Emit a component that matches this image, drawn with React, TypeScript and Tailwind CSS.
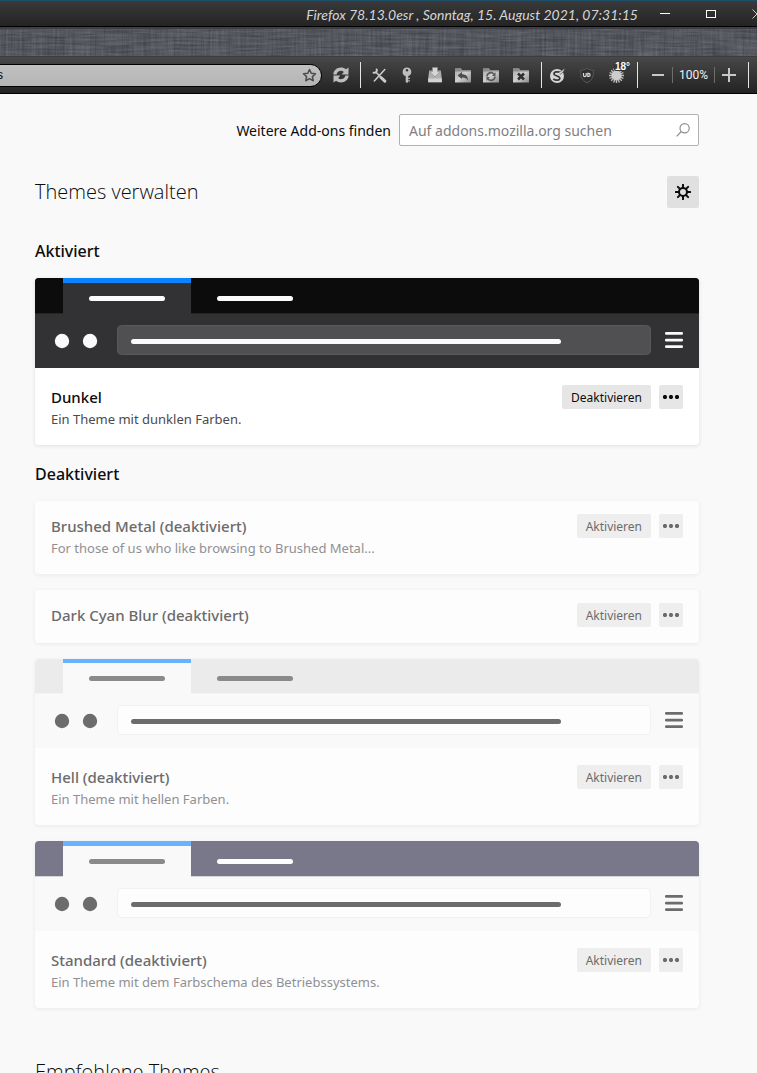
import React from "react";

type Palette = {
  frame: string;
  tab: string;
  accent: string;
  tabLine: string;
  idleLine: string;
  toolbar: string;
  divider: string;
  icon: string;
  field: string;
  fieldBorder: string;
  tabHeight: number;
};

const dark: Palette = {
  frame: "#0c0c0d",
  tab: "#323234",
  accent: "#0a84ff",
  tabLine: "#fbfbfe",
  idleLine: "#fbfbfe",
  toolbar: "#323234",
  divider: "#252526",
  icon: "#fafafa",
  field: "#505052",
  fieldBorder: "#59595b",
  tabHeight: 36,
};

const light: Palette = {
  frame: "#ebebec",
  tab: "#f9f9f9",
  accent: "#68b3ff",
  tabLine: "#8a8a8a",
  idleLine: "#8a8a8a",
  toolbar: "#f9f9f9",
  divider: "#f4f4f4",
  icon: "#6c6c6c",
  field: "#fdfdfd",
  fieldBorder: "#f1f1f1",
  tabHeight: 35,
};

const standard: Palette = {
  ...light,
  frame: "#78788a",
  idleLine: "#fdfdfe",
  divider: "#d5d5da",
  tabHeight: 36,
};

function Preview({ p }: { p: Palette }) {
  const t = p.tabHeight;
  return (
    <svg
      className="block w-full"
      viewBox={`0 0 664 ${t + 54}`}
      preserveAspectRatio="xMinYMin slice"
      aria-hidden="true"
    >
      <rect width="664" height={t + 54} fill={p.toolbar} />
      <rect width="664" height={t} fill={p.frame} />
      <rect y={t - 1} width="664" height="1" fill={p.divider} />
      <rect x="28" width="128" height={t} fill={p.tab} />
      <rect x="28" width="128" height={t - 31} fill={p.accent} />
      <rect x="54" y={t - 18} width="76" height="5" rx="2.5" fill={p.tabLine} />
      <rect x="182" y={t - 18} width="76" height="5" rx="2.5" fill={p.idleLine} />
      <circle cx="27" cy={t + 27} r="7.2" fill={p.icon} />
      <circle cx="55" cy={t + 27} r="7.2" fill={p.icon} />
      <rect x="82.5" y={t + 11.5} width="533" height="29" rx="4" fill={p.field} stroke={p.fieldBorder} />
      <rect x="96" y={t + 25} width="430" height="5" rx="2.5" fill={p.icon} />
      <rect x="630" y={t + 18} width="18" height="2.7" rx="1.2" fill={p.icon} />
      <rect x="630" y={t + 24.7} width="18" height="2.7" rx="1.2" fill={p.icon} />
      <rect x="630" y={t + 31.2} width="18" height="2.7" rx="1.2" fill={p.icon} />
    </svg>
  );
}

type Theme = { name: string; description?: string; preview?: Palette; enabled?: boolean };

function ThemeCard({ name, description, preview, enabled }: Theme) {
  return (
    <article
      className={
        enabled
          ? "overflow-hidden rounded bg-white text-[#0c0c0d] shadow-[0_1px_4px_rgba(12,12,13,0.1)]"
          : "overflow-hidden rounded bg-[#fdfdfd] text-[#6b6b6c] shadow-[0_1px_4px_rgba(12,12,13,0.07)]"
      }
    >
      {preview && <Preview p={preview} />}
      <div className={preview ? "flex items-start gap-2 px-4 pt-[17px] pb-4" : "flex items-start gap-2 px-4 pt-[13px] pb-4"}>
        <div className="min-w-0 flex-1">
          <h3 className="text-[15px] leading-6 font-medium">{name}</h3>
          {description && (
            <p className={enabled ? "text-[13px] leading-5 text-[#4a4a4f]" : "text-[13px] leading-5 text-[#909094]"}>
              {description}
            </p>
          )}
        </div>
        <button
          type="button"
          className={
            enabled
              ? "h-6 rounded-xs bg-[#e6e6e6] px-[9px] pt-px text-[12px]"
              : "h-6 rounded-xs bg-[#eeeeee] px-[9px] pt-px text-[12px]"
          }
        >
          {enabled ? "Deaktivieren" : "Aktivieren"}
        </button>
        <button
          type="button"
          aria-label="Weitere Optionen"
          className={
            enabled
              ? "flex size-6 items-center justify-center rounded-xs bg-[#e6e6e6]"
              : "flex size-6 items-center justify-center rounded-xs bg-[#eeeeee]"
          }
        >
          <svg width="16" height="4" viewBox="0 0 16 4" fill="currentColor" aria-hidden="true">
            <circle cx="2" cy="2" r="2.1" />
            <circle cx="8" cy="2" r="2.1" />
            <circle cx="14" cy="2" r="2.1" />
          </svg>
        </button>
      </div>
    </article>
  );
}

function ToolButton({ label, children }: { label: string; children: React.ReactNode }) {
  return (
    <button type="button" aria-label={label} className="relative flex h-7 w-7 shrink-0 items-center justify-center">
      {children}
    </button>
  );
}

function Separator() {
  return <span className="h-[26px] w-px shrink-0 bg-[#e4e4e4]" />;
}

function ThinSeparator() {
  return <span className="h-4 w-px shrink-0 bg-[#6d6d6d]" />;
}

function Folder({ children }: { children: React.ReactNode }) {
  return (
    <svg width="18" height="18" viewBox="0 0 18 18" aria-hidden="true">
      <defs>
        <linearGradient id="folder" x1="0" y1="0" x2="1" y2="1">
          <stop offset="0" stopColor="#a8a8a8" />
          <stop offset="0.5" stopColor="#d0d0d0" />
          <stop offset="1" stopColor="#8c8c8c" />
        </linearGradient>
      </defs>
      <path d="M1 2.5h6l1 1.5h9v12.5H1z" fill="url(#folder)" />
      <path d="M1 2.5h6l1 1.5h9v1.5H1z" fill="#8b8b8b" />
      {children}
    </svg>
  );
}

function TitleBar() {
  return (
    <header className="flex h-[27px] items-center justify-end border-t border-b border-t-[#1d5068] border-b-black bg-linear-to-b from-[#3a3a3a] to-[#242424] text-[#d3d7da]">
      <p className="mr-1 pt-0.5 font-['Lato',sans-serif] text-[14px] whitespace-nowrap italic">
        Firefox 78.13.0esr , Sonntag, 15. August 2021, 07:31:15
      </p>
      <button type="button" aria-label="Minimieren" className="flex h-full w-[46px] shrink-0 items-center justify-center">
        <span className="h-px w-2.5 bg-white" />
      </button>
      <button type="button" aria-label="Maximieren" className="flex h-full w-[46px] shrink-0 items-center justify-center">
        <span className="h-2 w-2.5 border border-white" />
      </button>
      <button type="button" aria-label="Schließen" className="-mr-[23px] flex h-full w-[46px] shrink-0 items-center justify-center">
        <svg width="10" height="10" viewBox="0 0 10 10" stroke="#d0d0d0" aria-hidden="true">
          <path d="M.5 .5l9 9M9.5 .5l-9 9" />
        </svg>
      </button>
    </header>
  );
}

function LinenStrip() {
  return (
    <div className="h-[29px] overflow-hidden border-t-2 border-[#3e3e45] bg-[#54575f]">
      <svg className="block h-full w-full" aria-hidden="true">
        <filter id="warp" x="0" y="0" width="100%" height="100%" colorInterpolationFilters="sRGB">
          <feTurbulence type="fractalNoise" baseFrequency="0.45 0.025" numOctaves="3" seed="4" />
          <feColorMatrix values="0.4 0 0 0 0.13  0.4 0 0 0 0.14  0.4 0 0 0 0.17  0 0 0 0 0.5" />
        </filter>
        <filter id="weft" x="0" y="0" width="100%" height="100%" colorInterpolationFilters="sRGB">
          <feTurbulence type="fractalNoise" baseFrequency="0.03 0.5" numOctaves="3" seed="9" />
          <feColorMatrix values="0.4 0 0 0 0.13  0.4 0 0 0 0.14  0.4 0 0 0 0.17  0 0 0 0 0.4" />
        </filter>
        <rect width="100%" height="100%" filter="url(#warp)" />
        <rect width="100%" height="100%" filter="url(#weft)" />
      </svg>
    </div>
  );
}

function Toolbar() {
  return (
    <nav className="flex h-[38px] items-center border-t border-b border-t-[#3d3d40] border-b-black bg-linear-to-b from-[#484848] to-[#232323] text-[#c8c8c8]">
      <div className="-ml-1 flex h-[23px] flex-1 items-center rounded-r-full border border-black bg-linear-to-b from-[#c0c0c0] to-[#b5b5b5] pr-1">
        <input
          aria-label="Adresse"
          defaultValue="s"
          className="h-full min-w-0 flex-1 bg-transparent font-['Liberation_Sans',sans-serif] text-[12px] text-black outline-none"
        />
        <button type="button" aria-label="Lesezeichen">
          <svg width="15" height="15" viewBox="0 0 16 16" fill="none" stroke="#4d4d4d" strokeWidth="1.6" strokeLinejoin="round" aria-hidden="true">
            <path d="M8 1.6l1.900 4.100 4.500.5-3.300 3 .9 4.400L8 11.400l-4 2.200.9-4.400-3.300-3 4.500-.5z" />
          </svg>
        </button>
      </div>
      <button type="button" aria-label="Neu laden" className="flex h-7 w-[38px] shrink-0 items-center justify-center">
        <svg width="18" height="18" viewBox="0 0 18 18" fill="#bdbdbd" aria-hidden="true">
          <path d="M1.3 8.4C1.6 4.300 4.900 1.500 9 1.500c2 0 3.600.6 4.900 1.700L16.500 1.500v6.900H9.600l2.200-2.400C11 5.200 10.100 4.800 9 4.800 6.800 4.800 5.100 6.200 4.600 8.400z" />
          <path d="M16.700 9.600c-.3 4.100-3.600 6.900-7.700 6.900-2 0-3.600-.6-4.900-1.700L1.500 16.500V9.600h6.900L6.200 12c.8.800 1.700 1.200 2.800 1.200 2.200 0 3.900-1.400 4.400-3.600z" />
        </svg>
      </button>
      <Separator />
      <div className="ml-1 flex">
        <ToolButton label="Werkzeuge">
          <svg width="15" height="15" viewBox="0 0 15 15" fill="none" stroke="#cccccc" strokeLinecap="round" aria-hidden="true">
            <path d="M4 4.200l4 4" strokeWidth="1.600" />
            <path d="M9 9.500l3.800 3.600" strokeWidth="3" />
            <path d="M12.800 1.500L2.300 13" strokeWidth="1.500" />
            <path d="M4.700 1.500c.7 1.700-.8 3.500-3.100 3.200" strokeWidth="2" />
          </svg>
        </ToolButton>
        <ToolButton label="Passwörter">
          <svg width="12" height="18" viewBox="0 0 12 18" aria-hidden="true">
            <path fillRule="evenodd" d="M6 1.500a4.400 4.400 0 0 1 1.200 8.600V16L6 17l-1.300-1v-5.900A4.400 4.400 0 0 1 6 1.500zm0 1.400a1.300 1.300 0 1 0 0 2.600 1.300 1.300 0 0 0 0-2.600z" fill="#bdbdbd" />
            <path d="M7 11.800h2v1.300H7zM7 14.200h2v1.300H7z" fill="#a6a6a6" />
          </svg>
        </ToolButton>
        <ToolButton label="Downloads">
          <svg width="16" height="18" viewBox="0 0 16 18" aria-hidden="true">
            <path d="M2.200 4.500h11.600l1 8v3.700H1.200v-3.700z" fill="#b0b0b0" />
            <path d="M1.200 12.500h13.600v3.700H1.200z" fill="#d3d3d3" />
            <path d="M5.500 1.500h5v4.200h2.700L8 10.800 2.800 5.700h2.700z" fill="#d6d6d6" stroke="#8a8a8a" strokeWidth=".6" />
          </svg>
        </ToolButton>
        <ToolButton label="Zurückholen">
          <Folder>
            <path d="M3.500 9.500L8 6v2.200c4 0 5.800 2 6 6-1.400-2-3-2.800-6-2.800V13z" fill="#4c4c4c" />
          </Folder>
        </ToolButton>
        <ToolButton label="Aktualisieren">
          <Folder>
            <path d="M5 10.500A4 4 0 0 1 12 8M13 10.500A4 4 0 0 1 6 13" fill="none" stroke="#595959" strokeWidth="1.600" />
            <path d="M13.500 6v4H10zM4.500 15v-4H8z" fill="#595959" />
          </Folder>
        </ToolButton>
        <span className="w-0.5" />
        <ToolButton label="Ordner schließen">
          <Folder>
            <path d="M6 7.500l6 6M12 7.500l-6 6" stroke="#303030" strokeWidth="2.600" />
          </Folder>
        </ToolButton>
      </div>
      <span className="w-1.5" />
      <Separator />
      <div className="ml-px flex gap-0.5">
        <ToolButton label="Stylus">
          <svg width="17" height="17" viewBox="0 0 17 17" aria-hidden="true">
            <circle cx="8" cy="9" r="7" fill="#d6d6d6" />
            <path d="M11.500 6C9.800 4.500 5 4.400 5 6.800c0 2.500 5.800 1.800 5.800 4.400 0 2.400-4.500 2.400-6.500.6" fill="none" stroke="#383838" strokeWidth="1.700" />
            <path d="M9.500 5.500C12 4.500 14 2.800 15.500 1.200c.2 2-1.500 4.500-4.500 6.300" fill="#d6d6d6" stroke="#444" strokeWidth=".6" />
          </svg>
        </ToolButton>
        <ToolButton label="uBlock">
          <svg width="16" height="17" viewBox="0 0 16 17" aria-hidden="true">
            <path d="M8 1.300c2 1.300 4 1.900 6.400 2 .2 6-1 10-6.400 12.500C2.600 13.300 1.400 9.300 1.600 3.300 4 3.200 6 2.600 8 1.300z" fill="#303030" stroke="#595959" />
            <path d="M4.500 6v2.300a1.300 1.300 0 0 0 2.700 0V6M8.800 6.400v3h.8a1.500 1.500 0 0 0 0-3z" fill="none" stroke="#dadada" strokeWidth="1.200" />
          </svg>
        </ToolButton>
        <ToolButton label="Wetter">
          <svg width="18" height="18" viewBox="0 0 18 18" aria-hidden="true">
            <g stroke="#bdbdbd" strokeWidth="1.400">
              <path d="M8.500 2v15M1 9.500h15M3.200 4.200l10.600 10.600M3.200 14.800L13.800 4.200" />
              <path d="M5.600 2.600l5.800 13.800M11.400 2.600L5.600 16.400M1.600 6.600l13.800 5.800M1.600 12.400l13.800-5.800" />
            </g>
            <circle cx="8.500" cy="9.500" r="5" fill="#cdcdcd" />
          </svg>
          <span className="absolute top-px right-px rounded-xs bg-[#353535] pl-px font-['Liberation_Sans',sans-serif] text-[10px] leading-[9px] font-bold text-white">
            18°
          </span>
        </ToolButton>
      </div>
      <span className="w-1.5" />
      <Separator />
      <div className="ml-1.5 flex items-center">
        <ToolButton label="Verkleinern">
          <span className="h-0.5 w-3 bg-[#c8c8c8]" />
        </ToolButton>
        <ThinSeparator />
        <button type="button" className="w-[41px] text-center font-['Roboto',sans-serif] text-[12px] text-[#f0f0f0]">
          100%
        </button>
        <ThinSeparator />
        <ToolButton label="Vergrößern">
          <svg width="14" height="14" viewBox="0 0 14 14" stroke="#c8c8c8" strokeWidth="2" aria-hidden="true">
            <path d="M0 7h14M7 0v14" />
          </svg>
        </ToolButton>
      </div>
      <span className="w-[5px]" />
      <Separator />
      <span className="w-2" />
    </nav>
  );
}

const disabledThemes: Theme[] = [
  { name: "Brushed Metal (deaktiviert)", description: "For those of us who like browsing to Brushed Metal..." },
  { name: "Dark Cyan Blur (deaktiviert)" },
  { name: "Hell (deaktiviert)", description: "Ein Theme mit hellen Farben.", preview: light },
  {
    name: "Standard (deaktiviert)",
    description: "Ein Theme mit dem Farbschema des Betriebssystems.",
    preview: standard,
  },
];

export default function App() {
  return (
    <div className="flex h-screen flex-col overflow-hidden bg-[#f9f9f9] font-['Noto_Sans',sans-serif] text-[#0c0c0d]">
      <div className="shrink-0">
        <TitleBar />
        <LinenStrip />
        <Toolbar />
      </div>
      <main className="min-h-0 flex-1 overflow-hidden pt-5 pr-[58px] pl-[35px]">
        <div className="max-w-[664px]">
          <form className="flex items-center justify-end gap-2" onSubmit={(e) => e.preventDefault()}>
            <label htmlFor="addon-search" className="text-[14px]">
              Weitere Add-ons finden
            </label>
            <div className="flex h-8 w-[300px] items-center rounded-xs border border-[#b1b1b3] bg-white pr-2 pl-[9px]">
              <input
                id="addon-search"
                type="text"
                placeholder="Auf addons.mozilla.org suchen"
                className="min-w-0 flex-1 bg-transparent text-[14px] outline-none placeholder:text-[#808084]"
              />
              <svg width="14" height="14" viewBox="0 0 14 14" fill="none" stroke="#8f8f8f" strokeWidth="1.200" aria-hidden="true">
                <circle cx="8.600" cy="5.200" r="4.600" />
                <path d="M5.400 8.500L.6 13.300" />
              </svg>
            </div>
          </form>

          <div className="mt-[30px] flex h-8 items-center justify-between">
            <h1 className="font-['Open_Sans',sans-serif] text-[20px] leading-8 font-light">Themes verwalten</h1>
            <button
              type="button"
              aria-label="Werkzeuge für alle Add-ons"
              className="flex size-8 items-center justify-center rounded-xs bg-[#e0e0e1]"
            >
              <svg width="16" height="16" viewBox="0 0 16 16" fill="none" stroke="#0c0c0d" aria-hidden="true">
                <circle cx="8" cy="8" r="4" strokeWidth="2" />
                <path
                  d="M8 .8v3M8 12.200v3M.8 8h3M12.200 8h3M2.900 2.900l2 2M11.100 11.100l2 2M2.900 13.100l2-2M11.100 4.900l2-2"
                  strokeWidth="2"
                  strokeLinecap="round"
                />
              </svg>
            </button>
          </div>

          <section className="mt-[30px]">
            <h2 className="mb-[15px] pt-px text-[16px] leading-6 font-medium">Aktiviert</h2>
            <ThemeCard name="Dunkel" description="Ein Theme mit dunklen Farben." preview={dark} enabled />
          </section>

          <section className="mt-4">
            <h2 className="mb-[15px] pt-px text-[16px] leading-6 font-medium">Deaktiviert</h2>
            <div className="flex flex-col gap-4">
              {disabledThemes.map((theme) => (
                <ThemeCard key={theme.name} {...theme} />
              ))}
            </div>
          </section>

          <h2 className="mt-12 font-['Open_Sans',sans-serif] text-[20px] leading-8 font-light">Empfohlene Themes</h2>
        </div>
      </main>
    </div>
  );
}
